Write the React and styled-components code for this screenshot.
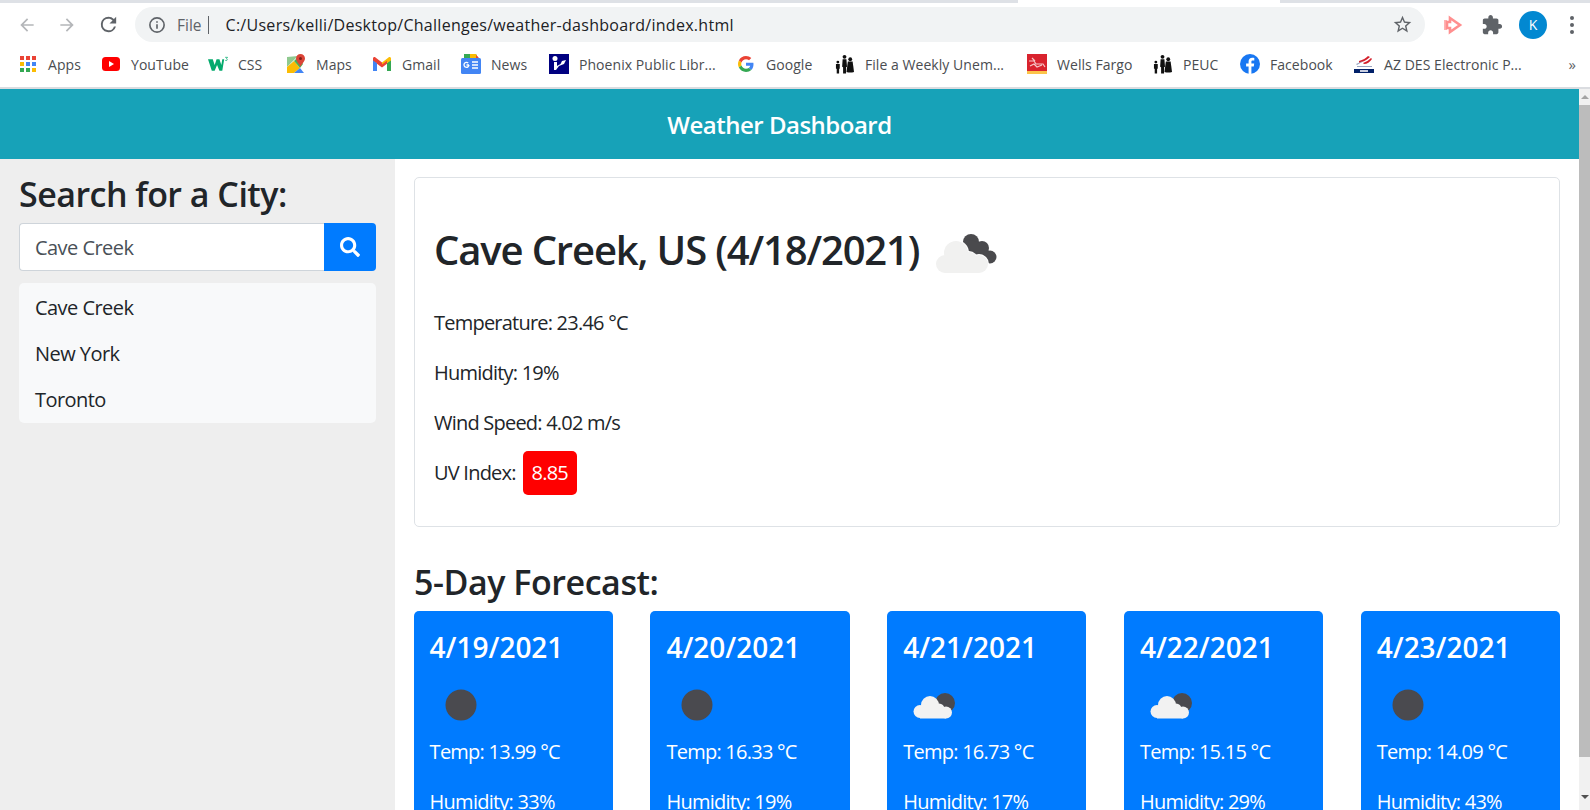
import styled, { createGlobalStyle } from "styled-components";
import { FaSearch } from "react-icons/fa";

const GlobalStyle = createGlobalStyle`
html,body{
  margin:0;
  padding:0;
  height:810px;
  overflow:hidden;
  background:#fff;
  font-family:"Open Sans","Noto Sans",sans-serif;
  color:#212529;
}
*{box-sizing:border-box;}
`;

const Page = styled.div`
  width:1590px;
  height:810px;
  display:flex;
  flex-direction:column;
  overflow:hidden;
`;

/* browser chrome */
const TabStrip = styled.div`
  height:3px;
  flex:none;
  display:flex;
  background:#dee1e6;
  padding-left:1018px;
`;
const ActiveTab = styled.div`
  width:262px;
  background:#fff;
`;
const Toolbar = styled.div`
  height:42px;
  flex:none;
  display:flex;
  align-items:center;
  padding:4px 0 3px 17px;
`;
const NavButton = styled.button`
  width:40px;
  height:24px;
  flex:none;
  padding:0;
  border:0;
  background:none;
  display:flex;
  align-items:center;
  justify-content:flex-start;
  color:${p => p.$dim ? "#b4b6b9" : "#5f6368"};
`;
const Omnibox = styled.div`
  width:1290px;
  height:35px;
  margin-left:-2px;
  border-radius:18px;
  background:#f1f3f4;
  display:flex;
  align-items:center;
  padding:0 12px 0 13px;
  font-size:16px;
`;
const FileLabel = styled.span`
  color:#5f6368;
  margin-left:11px;
  padding-right:6px;
  border-right:1px solid #5f6368;
  line-height:18px;
  font-size:15.5px;
`;
const Url = styled.span`
  color:#202124;
  margin-left:17px;
  flex:1;
  letter-spacing:.28px;
`;
const ToolIcons = styled.div`
  display:flex;
  align-items:center;
  margin-left:17px;
`;
const PuzzleSlot = styled.span`
  display:flex;
  margin-left:17px;
`;
const Avatar = styled.div`
  width:28px;
  height:28px;
  border-radius:50%;
  background:#0288d1;
  color:#fff;
  font-size:14px;
  display:flex;
  align-items:center;
  justify-content:center;
  margin:0 23px 0 16px;
`;
const Dots = styled.div`
  display:flex;
  flex-direction:column;
  gap:3px;
  span{
    width:4px;
    height:4px;
    border-radius:50%;
    background:#5f6368;
  }
`;
const Bookmarks = styled.div`
  height:44px;
  flex:none;
  display:flex;
  align-items:center;
  padding:0 0 4px 18px;
  background:#fff;
  border-bottom:2px solid #dadce0;
  position:relative;
`;
const Bookmark = styled.div`
  width:${p => p.$w}px;
  flex:none;
  display:flex;
  align-items:center;
  gap:10px;
  font-size:14px;
  letter-spacing:.05px;
  color:#4a4d51;
  white-space:nowrap;
`;
const IconBox = styled.span`
  width:20px;
  height:20px;
  flex:none;
  display:flex;
  align-items:center;
  justify-content:center;
`;
const More = styled.span`
  margin-left:auto;
  margin-right:14px;
  font-size:15px;
  color:#5f6368;
`;

/* page */
const Viewport = styled.div`
  flex:1;
  display:flex;
  min-height:0;
`;
const Content = styled.div`
  flex:1;
  min-width:0;
  display:flex;
  flex-direction:column;
`;
const Scrollbar = styled.div`
  width:11px;
  flex:none;
  background:#f1f1f1;
  display:flex;
  flex-direction:column;
  align-items:center;
  padding-top:6px;
`;
const ArrowUp = styled.span`
  width:0;
  height:0;
  border:4px solid transparent;
  border-top:0;
  border-bottom:4px solid #a3a3a3;
`;
const ArrowDown = styled.span`
  width:0;
  height:0;
  border:4px solid transparent;
  border-bottom:0;
  border-top:4px solid #505050;
  margin-top:38px;
`;
const Thumb = styled.div`
  width:100%;
  height:652px;
  margin-top:6px;
  background:#bcbcbc;
`;
const Header = styled.header`
  height:70px;
  flex:none;
  background:#17a2b8;
  color:#fff;
  display:flex;
  align-items:center;
  justify-content:center;
  font-size:24px;
  font-weight:600;
  letter-spacing:-.5px;
  padding-right:20px;
`;
const Columns = styled.div`
  flex:1;
  min-height:0;
  display:flex;
`;
const Sidebar = styled.aside`
  width:395px;
  flex:none;
  background:#eee;
  padding:14px 19px 0;
`;
const SideTitle = styled.h2`
  margin:0;
  font-size:34px;
  line-height:42px;
  font-weight:600;
  letter-spacing:-.52px;
`;
const SearchRow = styled.div`
  display:flex;
  height:48px;
  margin-top:8px;
`;
const SearchInput = styled.input`
  flex:1;
  min-width:0;
  border:1px solid #ced4da;
  border-right:0;
  border-radius:4px 0 0 4px;
  padding:0 15px;
  font:inherit;
  font-size:20px;
  letter-spacing:-.55px;
  color:#495057;
  background:#fff;
`;
const SearchButton = styled.button`
  width:52px;
  flex:none;
  border:0;
  border-radius:0 4px 4px 0;
  background:#007bff;
  color:#fff;
  font-size:20px;
  display:flex;
  align-items:center;
  justify-content:center;
  padding:0;
`;
const CityList = styled.ul`
  list-style:none;
  margin:12px 0 0;
  padding:2px 0 0;
  background:#f8f9fa;
  border-radius:5px;
`;
const City = styled.li`
  height:46px;
  line-height:46px;
  padding:0 16px;
  font-size:20px;
  letter-spacing:-.55px;
`;
const Main = styled.main`
  flex:1;
  min-width:0;
  padding:18px 19px 0 19px;
  overflow:hidden;
`;
const CurrentCard = styled.section`
  height:350px;
  border:1px solid #dee2e6;
  border-radius:5px;
  padding:41px 19px 0;
`;
const CityTitle = styled.h1`
  margin:0;
  display:flex;
  align-items:center;
  height:60px;
  font-size:40px;
  font-weight:600;
  letter-spacing:-1.14px;
  gap:14px;
  svg{
    margin-top:14px;
  }
`;
const Stat = styled.p`
  margin:0;
  height:50px;
  line-height:50px;
  font-size:20px;
  letter-spacing:-.78px;
  display:flex;
  align-items:center;
  &:first-of-type{margin-top:19px;}
`;
const UvBadge = styled.span`
  width:54px;
  height:44px;
  margin-left:7px;
  border-radius:5px;
  background:red;
  color:#fff;
  display:flex;
  align-items:center;
  justify-content:center;
`;
const ForecastTitle = styled.h2`
  margin:34px 0 0;
  height:42px;
  line-height:42px;
  font-size:34px;
  font-weight:600;
  letter-spacing:-.45px;
`;
const ForecastRow = styled.div`
  display:grid;
  grid-template-columns:repeat(5,199.25px);
  justify-content:space-between;
  margin:8px 0 0 -.4px;
`;
const DayCard = styled.article`
  height:260px;
  background:#007bff;
  border-radius:5px 5px 0 0;
  color:#fff;
  padding:16px;
`;
const DayDate = styled.h3`
  margin:0;
  height:40px;
  line-height:40px;
  font-size:28px;
  font-weight:600;
  letter-spacing:-.02px;
`;
const DayIcon = styled.svg`
  display:block;
  margin-top:7px;
`;
const DayStat = styled.div`
  height:50px;
  line-height:50px;
  font-size:20px;
  letter-spacing:-.75px;
  margin-top:${p => p.$first ? "-9px" : "0"};
`;

/* drawn icons */
const ArrowLeft = () => (
  <svg width="20" height="20" viewBox="0 0 24 24" fill="currentColor"><path d="M20 11H7.830l5.590-5.590L12 4l-8 8 8 8 1.410-1.410L7.830 13H20z" /></svg>
);
const ArrowRight = () => (
  <svg width="20" height="20" viewBox="0 0 24 24" fill="currentColor"><path d="M4 13h12.170l-5.590 5.590L12 20l8-8-8-8-1.410 1.410L16.170 11H4z" /></svg>
);
const Reload = () => (
  <svg width="23" height="23" viewBox="0 0 24 24" fill="currentColor"><path d="M17.650 6.350A7.960 7.960 0 0 0 12 4a8 8 0 1 0 7.750 10h-2.080A6 6 0 1 1 12 6c1.660 0 3.140.690 4.220 1.780L13 11h7V4z" /></svg>
);
const InfoIcon = () => (
  <svg width="18" height="18" viewBox="0 0 24 24" fill="none" stroke="#5f6368" strokeWidth="2.200">
    <circle cx="12" cy="12" r="9.500" />
    <path d="M12 11v6M12 7v2" />
  </svg>
);
const StarIcon = () => (
  <svg width="21" height="21" viewBox="0 0 24 24" fill="#5f6368"><path d="M22 9.240l-7.190-.620L12 2 9.190 8.630 2 9.240l5.460 4.730L5.820 21 12 17.270 18.180 21l-1.630-7.030L22 9.240zM12 15.400l-3.760 2.270 1-4.280-3.320-2.880 4.380-.380L12 6.100l1.710 4.040 4.380.380-3.320 2.880 1 4.280L12 15.400z" /></svg>
);
const CastIcon = () => (
  <svg width="22" height="22" viewBox="0 0 22 22">
    <path d="M2 6h3v10H2z" fill="#ffb3b3" />
    <path d="M8 4l10 7-10 7v-4H5V8h3z" fill="none" stroke="#ff8f8f" strokeWidth="2.600" />
  </svg>
);
const PuzzleIcon = () => (
  <svg width="22" height="22" viewBox="0 0 24 24" fill="#5f6368"><path d="M20.500 11H19V7c0-1.100-.9-2-2-2h-4V3.500C13 2.120 11.880 1 10.500 1S8 2.120 8 3.500V5H4c-1.100 0-1.990.9-1.990 2v3.800H3.500c1.490 0 2.700 1.210 2.700 2.700s-1.210 2.700-2.700 2.700H2V20c0 1.100.9 2 2 2h3.800v-1.500c0-1.490 1.210-2.700 2.700-2.700 1.490 0 2.700 1.210 2.700 2.700V22H17c1.100 0 2-.9 2-2v-4h1.500c1.380 0 2.500-1.120 2.500-2.500S21.880 11 20.500 11z" /></svg>
);

const AppsIcon = () => {
  const colors = ["#ea4335", "#ea4335", "#ea4335", "#fbbc04", "#4285f4", "#4285f4", "#34a853", "#34a853", "#fbbc04"];
  return (
    <svg width="16" height="16" viewBox="0 0 16 16">
      {colors.map((c, i) => (
        <rect key={i} x={(i % 3) * 6} y={Math.floor(i / 3) * 6} width="4" height="4" fill={c} />
      ))}
    </svg>
  );
};
const YouTubeIcon = () => (
  <svg width="18" height="14" viewBox="0 0 18 14">
    <rect width="18" height="14" rx="3.500" fill="#f00" />
    <path d="M7 4l5 3-5 3z" fill="#fff" />
  </svg>
);
const W3Icon = () => (
  <svg width="21" height="16" viewBox="0 0 21 16">
    <path d="M0 3h5l2 6 2-6h3l2 6 1-6h2l-2 12h-3l-2.500-6-2.500 6H4z" fill="#04aa6d" />
    <path d="M18 1h2.500l-1 1.400c.9.200 1 1.800-.2 2-.5.100-1-.1-1.300-.4" fill="none" stroke="#04aa6d" strokeWidth=".8" />
  </svg>
);
const MapsIcon = () => (
  <svg width="20" height="20" viewBox="0 0 20 20">
    <path d="M1 3l11-1-11 11z" fill="#8fc98f" />
    <path d="M1 13l7-6 6 7-6 5H1z" fill="#fbbc04" />
    <path d="M8 7l4-4 5 7-3 4z" fill="#4caf50" />
    <path d="M8 19l6-5 4 5z" fill="#4285f4" />
    <path d="M14.500 0a4.500 4.500 0 0 1 4.500 4.500c0 3-3 5-4.500 8-1.500-3-4.500-5-4.500-8A4.500 4.500 0 0 1 14.500 0z" fill="#db4437" />
    <circle cx="14.500" cy="4.500" r="1.500" fill="#7c1e17" />
  </svg>
);
const GmailIcon = () => (
  <svg width="18" height="14" viewBox="0 0 18 14">
    <path d="M0 1.500V14h4V6z" fill="#4285f4" />
    <path d="M14 6v8h4V1.500z" fill="#34a853" />
    <path d="M0 1.500C0 .2 1.500-.4 2.500.4L9 5.500v4L0 3.500z" fill="#ea4335" />
    <path d="M18 1.500c0-1.300-1.500-1.900-2.500-1.100L9 5.500v4l9-6z" fill="#fbbc04" />
    <path d="M4 3.800l5 3.700 5-3.700v3L9 10.500 4 6.800z" fill="#ea4335" />
  </svg>
);
const NewsIcon = () => (
  <svg width="20" height="20" viewBox="0 0 20 20">
    <path d="M3 0h12l2 4H3z" fill="#34a853" />
    <path d="M9 0h6l2 4H9z" fill="#fbbc04" />
    <path d="M15 1l3 3h-3z" fill="#ea4335" />
    <rect y="4" width="20" height="16" rx="1.500" fill="#4285f4" />
    <path d="M8 11H5.500M8 11a2.500 2.500 0 1 1-.8-2" fill="none" stroke="#fff" strokeWidth="1.300" />
    <path d="M11 8h6M11 11h6M11 14h6" stroke="#fff" strokeWidth="1.300" />
  </svg>
);
const PhoenixIcon = () => (
  <svg width="20" height="20" viewBox="0 0 20 20">
    <rect width="20" height="20" fill="#000080" />
    <circle cx="6" cy="4.500" r="2.500" fill="#fff" />
    <path d="M5 8v8l2 0 3-4 5-2 2-4-4 1-1.500 3L8 12V8z" fill="#fff" />
  </svg>
);
const GoogleIcon = () => (
  <svg width="16" height="16" viewBox="0 0 48 48">
    <path fill="#EA4335" d="M24 9.500c3.500 0 6.700 1.300 9.100 3.500l6.800-6.800C35.800 2.400 30.200 0 24 0 14.600 0 6.500 5.400 2.600 13.200l7.900 6.200C12.400 13.700 17.700 9.500 24 9.500z" />
    <path fill="#4285F4" d="M46.500 24.500c0-1.600-.2-3.100-.4-4.500H24v9h12.700c-.6 3-2.200 5.500-4.700 7.200l7.700 6c4.500-4.200 6.800-10.400 6.800-17.700z" />
    <path fill="#FBBC05" d="M10.500 28.600c-.5-1.400-.8-3-.8-4.600s.3-3.200.8-4.600l-7.900-6.200C.9 16.500 0 20.100 0 24s.9 7.500 2.600 10.800z" />
    <path fill="#34A853" d="M24 48c6.500 0 11.900-2.100 15.900-5.800l-7.700-6c-2.100 1.400-4.900 2.300-8.200 2.300-6.300 0-11.600-4.200-13.500-9.900l-7.900 6.100C6.500 42.600 14.600 48 24 48z" />
  </svg>
);
const PeopleIcon = () => (
  <svg width="21" height="20" viewBox="0 0 21 20" fill="#111">
    <circle cx="3" cy="8" r="1.500" />
    <path d="M1 10h4v5H4.300v5H1.800v-5H1z" />
    <circle cx="10" cy="2.500" r="2" />
    <path d="M8 5h4l.6 8-1 .5V20H8.500v-6.500l-1-.5z" />
    <circle cx="16" cy="5" r="2" />
    <path d="M13.500 7.500h5l1.500 11-2 .5h-4l-2-.5z" />
  </svg>
);
const WellsIcon = () => (
  <svg width="20" height="20" viewBox="0 0 20 20">
    <rect width="20" height="17" fill="#d9232e" />
    <rect y="17" width="20" height="3" fill="#fcc44a" />
    <path d="M2 7h5l2 3h7l2 3M3 12l4-2 3 3 5-2M5 4l3 3" fill="none" stroke="#f6c9c9" strokeWidth="1.200" />
  </svg>
);
const BofaIcon = () => (
  <svg width="20" height="20" viewBox="0 0 20 20">
    <path d="M5 7c4-1 7-3 9-5l2 1c-3 3-7 5-11 6z" fill="#d4202c" />
    <path d="M9 9c3-1 6-3 8-5l1 1c-2 3-5 5-8 5z" fill="#d4202c" />
    <path d="M2 10l7-3-1 1-5 3zM3 12h15v1H3z" fill="#9aa4c0" />
    <rect y="15" width="20" height="4" fill="#012169" />
    <rect x="6" y="16" width="8" height="2" fill="#c7cde0" />
  </svg>
);
const FacebookIcon = () => (
  <svg width="20" height="20" viewBox="0 0 20 20">
    <circle cx="10" cy="10" r="10" fill="#1877f2" />
    <path d="M11.400 20v-7.500h2.400l.4-2.900h-2.800V7.900c0-.9.300-1.400 1.500-1.400h1.400V3.900c-.6-.1-1.300-.1-2-.1-2.300 0-3.700 1.300-3.700 3.800v2H6.100v2.900h2.500V20z" fill="#fff" />
  </svg>
);

// a cloud is a pile of circles over a flat bottom
const CloudShape = ({ bumps, base, fill, grow = 0 }) => (
  <g fill={fill}>
    {bumps.map(([cx, cy, r]) => (
      <circle key={`${cx}-${cy}`} cx={cx} cy={cy} r={r + grow} />
    ))}
    <rect x={base[0] - grow} y={base[1] - grow} width={base[2] + grow * 2} height={base[3] + grow * 2} />
  </g>
);

const bigCloud = {
  bumps: [[23, 20, 12], [12, 31, 9], [36, 27, 8], [46, 31, 9]],
  base: [12, 28, 34, 12],
};
const smallCloud = {
  bumps: [[27, 31, 9], [17, 37.500, 6.500], [36, 35, 5.500], [43, 38.500, 6]],
  base: [17, 34, 26, 10.500],
};

const BrokenClouds = () => (
  <svg width="64" height="46" viewBox="0 0 64 46">
    <g fill="#4a4a4d">
      <circle cx="38" cy="9" r="8" />
      <circle cx="49" cy="15" r="7" />
      <circle cx="57" cy="24" r="6.500" />
      <path d="M32 6l18 4 10 14-12 6-14-12z" />
    </g>
    <CloudShape {...bigCloud} fill="#fff" grow={1} />
    <CloudShape {...bigCloud} fill="#f1f1f0" />
  </svg>
);
const MoonIcon = () => (
  <DayIcon width="62" height="62" viewBox="0 0 62 62">
    <circle cx="31" cy="31" r="15.500" fill="#4a4a4f" />
  </DayIcon>
);
const MoonCloudIcon = () => (
  <DayIcon width="62" height="62" viewBox="0 0 62 62">
    <circle cx="42" cy="29" r="10" fill="#4a4a4f" />
    <CloudShape {...smallCloud} fill="#f2f2f2" />
  </DayIcon>
);

const bookmarks = [
  { label: "Apps", w: 83, icon: <AppsIcon /> },
  { label: "YouTube", w: 107, icon: <YouTubeIcon /> },
  { label: "CSS", w: 78, icon: <W3Icon /> },
  { label: "Maps", w: 86, icon: <MapsIcon /> },
  { label: "Gmail", w: 89, icon: <GmailIcon /> },
  { label: "News", w: 88, icon: <NewsIcon /> },
  { label: "Phoenix Public Libr...", w: 187, icon: <PhoenixIcon /> },
  { label: "Google", w: 99, icon: <GoogleIcon /> },
  { label: "File a Weekly Unem...", w: 192, icon: <PeopleIcon /> },
  { label: "Wells Fargo", w: 126, icon: <WellsIcon /> },
  { label: "PEUC", w: 87, icon: <PeopleIcon /> },
  { label: "Facebook", w: 114, icon: <FacebookIcon /> },
  { label: "AZ DES Electronic P...", w: 180, icon: <BofaIcon /> },
];

const days = [
  { date: "4/19/2021", temp: "13.99", humidity: 33, icon: "moon" },
  { date: "4/20/2021", temp: "16.33", humidity: 19, icon: "moon" },
  { date: "4/21/2021", temp: "16.73", humidity: 17, icon: "cloud" },
  { date: "4/22/2021", temp: "15.15", humidity: 29, icon: "cloud" },
  { date: "4/23/2021", temp: "14.09", humidity: 43, icon: "moon" },
];

function App() {
  return (
    <Page>
      <GlobalStyle />
      <TabStrip><ActiveTab /></TabStrip>
      <Toolbar>
        <NavButton $dim><ArrowLeft /></NavButton>
        <NavButton $dim><ArrowRight /></NavButton>
        <NavButton><Reload /></NavButton>
        <Omnibox>
          <InfoIcon />
          <FileLabel>File</FileLabel>
          <Url>C:/Users/kelli/Desktop/Challenges/weather-dashboard/index.html</Url>
          <StarIcon />
        </Omnibox>
        <ToolIcons>
          <CastIcon />
          <PuzzleSlot><PuzzleIcon /></PuzzleSlot>
          <Avatar>K</Avatar>
          <Dots><span /><span /><span /></Dots>
        </ToolIcons>
      </Toolbar>
      <Bookmarks>
        {bookmarks.map((b) => (
          <Bookmark key={b.label} $w={b.w}>
            <IconBox>{b.icon}</IconBox>
            {b.label}
          </Bookmark>
        ))}
        <More>»</More>
      </Bookmarks>
      <Viewport>
        <Content>
          <Header>Weather Dashboard</Header>
          <Columns>
            <Sidebar>
              <SideTitle>Search for a City:</SideTitle>
              <SearchRow>
                <SearchInput defaultValue="Cave Creek" />
                <SearchButton><FaSearch /></SearchButton>
              </SearchRow>
              <CityList>
                <City>Cave Creek</City>
                <City>New York</City>
                <City>Toronto</City>
              </CityList>
            </Sidebar>
            <Main>
              <CurrentCard>
                <CityTitle>Cave Creek, US (4/18/2021) <BrokenClouds /></CityTitle>
                <Stat>Temperature: 23.46 °C</Stat>
                <Stat>Humidity: 19%</Stat>
                <Stat>Wind Speed: 4.02 m/s</Stat>
                <Stat>UV Index: <UvBadge>8.85</UvBadge></Stat>
              </CurrentCard>
              <ForecastTitle>5-Day Forecast:</ForecastTitle>
              <ForecastRow>
                {days.map((d) => (
                  <DayCard key={d.date}>
                    <DayDate>{d.date}</DayDate>
                    {d.icon === "moon" ? <MoonIcon /> : <MoonCloudIcon />}
                    <DayStat $first>Temp: {d.temp} °C</DayStat>
                    <DayStat>Humidity: {d.humidity}%</DayStat>
                  </DayCard>
                ))}
              </ForecastRow>
            </Main>
          </Columns>
        </Content>
        <Scrollbar>
          <ArrowUp />
          <Thumb />
          <ArrowDown />
        </Scrollbar>
      </Viewport>
    </Page>
  );
}

export default App;
